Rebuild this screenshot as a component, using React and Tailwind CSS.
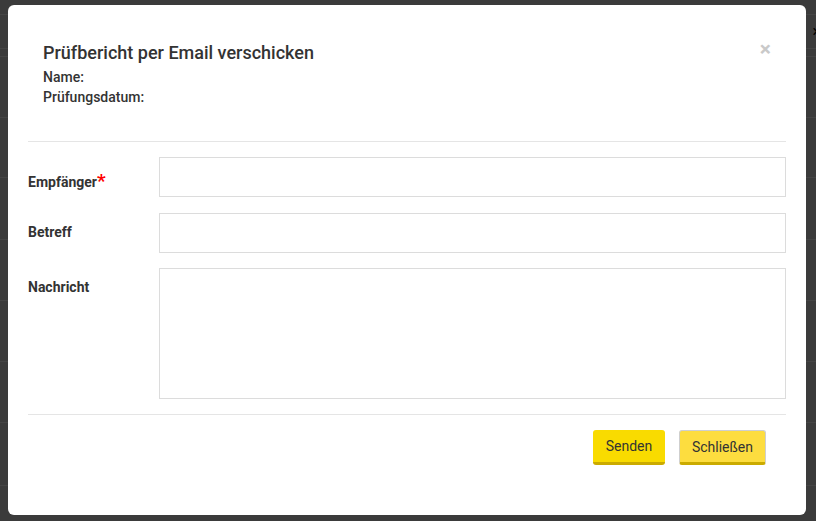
import React from "react";

const rows = [15, 34, 8, 61, 60, 62, 61, 61, 61, 63];

export default function App() {
  return (
    <div
      className="relative w-[816px] h-[521px] overflow-hidden bg-[#3b3b3b]"
      style={{ fontFamily: "Roboto, 'Liberation Sans', sans-serif" }}
    >
      {/* underlying page (dimmed) */}
      <div className="flex flex-col">
        {rows.map((h, i) => (
          <div
            key={i}
            className="border-b border-[#454545] flex justify-end items-center"
            style={{ height: h }}
          >
            {i === 1 && <span className="text-[16px] text-black pr-[1px] -mr-[6px]">×</span>}
          </div>
        ))}
        <div className="flex pl-[208px] pt-[14px] text-[12px] font-bold text-[#111] leading-none">
          <span>BETRIEBSMITTEL</span>
          <span className="pl-[220px] font-normal">(Verbrauch)</span>
        </div>
      </div>

      {/* modal */}
      <div className="absolute top-[5px] left-[8px] w-[798px] h-[510px] bg-white rounded-[6px] px-[20px] text-[#333]">
        <button className="absolute top-[34px] right-[35px] text-[21px] font-bold leading-none text-[#c9c9c9]">
          ×
        </button>
        <div className="pl-[15px] pt-[36px] pb-[34px] border-b border-[#e5e5e5]">
          <h4 className="text-[18px] leading-[24px] font-medium mb-[2px]">
            Prüfbericht per Email verschicken
          </h4>
          <div className="text-[14px] leading-[20px] font-medium">Name:</div>
          <div className="text-[14px] leading-[20px] font-medium">Prüfungsdatum:</div>
        </div>

        <div className="pt-[15px] pb-[15px] flex flex-col border-b border-[#e5e5e5]">
          <div className="flex">
            <label className="w-[131px] text-[14px] leading-[20px] font-bold pt-[14px]">
              Empfänger
              <span className="text-[#ff0000] text-[19px] leading-none">*</span>
            </label>
            <div className="flex-1 h-[40px] border border-[#dcdcdc]" />
          </div>
          <div className="flex mt-[16px]">
            <label className="w-[131px] text-[14px] leading-[20px] font-bold pt-[9px]">Betreff</label>
            <div className="flex-1 h-[40px] border border-[#dcdcdc]" />
          </div>
          <div className="flex mt-[15px]">
            <label className="w-[131px] text-[14px] leading-[20px] font-bold pt-[9px]">Nachricht</label>
            <div className="flex-1 h-[131px] border border-[#dcdcdc]" />
          </div>
        </div>

        <div className="flex justify-end gap-[14px] pt-[15px] pr-[20px]">
          <button className="w-[72px] h-[35px] rounded-[3px] bg-[#f9db00] border-b-[3px] border-[#cbab00] text-[14px] text-[#333] pt-[1px]">
            Senden
          </button>
          <button className="w-[87px] h-[35px] rounded-[3px] bg-[#fddd3f] border border-[#cfcfcf] border-b-[3px] border-b-[#cbab00] text-[14px] text-[#333] pt-[1px]">
            Schließen
          </button>
        </div>
      </div>
    </div>
  );
}
